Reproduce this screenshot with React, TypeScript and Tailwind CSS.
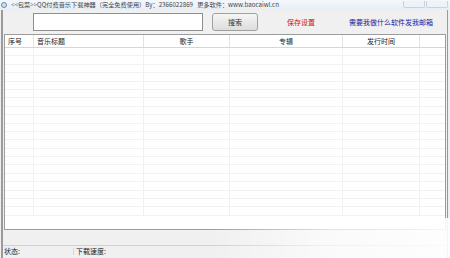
import React from "react";

const cols = [
  { w: 29, label: "序号", align: "left" },
  { w: 110, label: "音乐标题", align: "left" },
  { w: 86, label: "歌手", align: "center" },
  { w: 113, label: "专辑", align: "center" },
  { w: 77, label: "发行时间", align: "center" },
  { w: 28, label: "", align: "left" },
];

export default function App() {
  const rows = Array.from({ length: 20 });
  return (
    <div
      className="relative w-[450px] h-[258px] overflow-hidden bg-[#f0f0f0] text-[#222]"
      style={{ fontFamily: '"Noto Sans CJK SC", "Liberation Sans", sans-serif' }}
    >
      {/* title bar */}
      <div className="flex h-[10px] items-center bg-gradient-to-b from-[#f4f8fc] to-[#e8eef5]">
        <div className="ml-[1px] h-[6px] w-[6px] rounded-full border border-[#6a8ab0] bg-[#cfe0f0]" />
        <div className="ml-[4px] whitespace-nowrap text-[6.2px] leading-none text-[#444]">
          &lt;&lt;包菜&gt;&gt;QQ付费音乐下载神器（完全免费使用）By：2366022869&nbsp;&nbsp;&nbsp;更多软件：www.baocaiwl.cn
        </div>
        <div className="ml-auto mr-[2px] flex h-[9px] items-start gap-[1px]">
          <div className="h-[7px] w-[22px] rounded-b-[2px] border border-t-0 border-[#c7d2df] bg-[#eef3f8]" />
          <div className="h-[7px] w-[22px] rounded-b-[2px] border border-t-0 border-[#c7d2df] bg-[#eef3f8]" />
        </div>
      </div>

      <div className="flex h-[248px] flex-col border-l-[2px] border-r border-[#9a9a9a] ml-[1px] mr-[2px]">
        {/* toolbar */}
        <div className="flex h-[24px] items-center">
          <div className="ml-[30px] h-[18px] w-[170px] border border-[#8e8f8f] bg-white" />
          <div className="ml-[9px] flex h-[18px] w-[46px] items-center justify-center rounded-[3px] border border-[#a0a0a0] bg-gradient-to-b from-[#f6f6f6] to-[#dddddd] text-[7px] text-[#333]">
            搜索
          </div>
          <div className="ml-[29px] text-[7px] text-[#d01010]">保存设置</div>
          <div className="ml-[34px] text-[7px] text-[#1a1aa0]">需要我做什么软件发我邮箱</div>
        </div>

        {/* table */}
        <div className="ml-[1px] mr-[1px] flex h-[196px] flex-col overflow-hidden border border-[#9c9c9c] bg-white">
          <div className="flex h-[13px] shrink-0 border-b border-[#d6d6d6]">
            {cols.map((c, i) => (
              <div
                key={i}
                style={{ width: c.w }}
                className={`flex h-full shrink-0 items-center border-r border-[#e2e2e2] px-[3px] text-[7px] leading-none ${
                  c.align === "center" ? "justify-center" : "justify-start"
                }`}
              >
                {c.label}
              </div>
            ))}
          </div>
          {rows.map((_, r) => (
            <div key={r} className="flex h-[8.4px] shrink-0 border-b border-[#f2f2f2]">
              {cols.map((c, i) => (
                <div key={i} style={{ width: c.w }} className="h-full shrink-0 border-r border-[#f0f0f0]" />
              ))}
            </div>
          ))}
        </div>

        {/* spacer area */}
        <div className="h-[16px] shrink-0 border-b border-[#d0d0d0]" />

        {/* status bar */}
        <div className="flex h-[11px] items-center text-[7px] leading-none">
          <div className="w-[70px] pl-[1px]">状态:</div>
          <div className="w-[100px] border-l border-[#d8d8d8] pl-[2px]">下载速度:</div>
          <div className="flex-1 border-l border-[#d8d8d8]" />
        </div>
      </div>

      {/* watermark fade in bottom-right */}
      <div className="pointer-events-none absolute bottom-0 right-0 h-[40px] w-[240px] bg-gradient-to-l from-white/90 via-white/70 to-transparent" />
    </div>
  );
}
